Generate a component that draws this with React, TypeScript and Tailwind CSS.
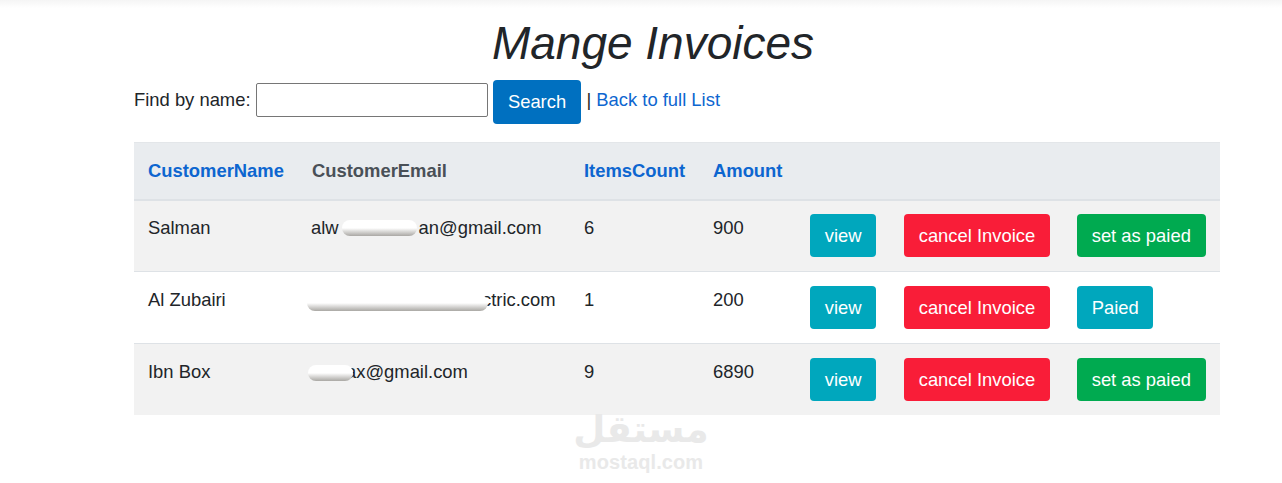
const rows = [
  { name: "Salman", count: "6", amount: "900", paid: false },
  { name: "Al Zubairi", count: "1", amount: "200", paid: true },
  { name: "Ibn Box", count: "9", amount: "6890", paid: false },
]

function Btn({ color, children }: { color: string; children: React.ReactNode }) {
  return (
    <button className={`h-[43px] px-[14.7px] rounded-[4px] whitespace-nowrap text-white text-[18.4px] ${color}`}>{children}</button>
  )
}

function Redact({ className }: { className: string }) {
  return (
    <span className={`absolute rounded-full bg-gradient-to-b from-white from-50% to-[#aaa8a4] ${className}`} />
  )
}

export default function App() {
  return (
    <div className="relative h-[483px] w-[1282px] overflow-hidden bg-white text-[#212529] text-[18.4px] font-['Liberation_Sans',Arial,sans-serif]">
      <div className="h-2 bg-gradient-to-b from-[#f5f5f5] to-white" />

      <div className="ml-[134px] w-[1086px]">
        <h1 className="mt-[12px] h-[48px] pr-[48px] text-center text-[46px] leading-[47px] italic">Mange Invoices</h1>

        <div className="mt-[12px] flex h-[44px] items-center">
          <label className="relative top-[-2px]">Find by name:</label>
          <input className="relative top-[-2px] ml-[5px] h-[34px] w-[232px] rounded-[2px] border border-[#767676] bg-white" />
          <button className="ml-[5px] h-[44px] w-[88px] rounded-[4px] pl-[1px] bg-[#0070c0] text-white text-[18.4px]">Search</button>
          <span className="relative top-[-2px] ml-[6px]">|</span>
          <a className="relative top-[-2px] ml-[5px] text-[#0d66d0]" href="#">Back to full List</a>
        </div>

        <table className="mt-[18px] w-[1086px] table-fixed border-collapse">
          <colgroup>
            <col className="w-[164px]" />
            <col className="w-[272px]" />
            <col className="w-[129px]" />
            <col className="w-[97px]" />
            <col className="w-[94px]" />
            <col className="w-[173px]" />
            <col className="w-[157px]" />
          </colgroup>
          <thead>
            <tr className="h-[57px] bg-[#e9ecef] border-b-2 border-b-[#dee2e6] border-t border-t-[#e3e6e9] text-left font-bold">
              <th className="px-[14px] text-[#0d66d0]">CustomerName</th>
              <th className="px-[14px] text-[#495057]">CustomerEmail</th>
              <th className="px-[14px] text-[#0d66d0]">ItemsCount</th>
              <th className="px-[14px] text-[#0d66d0]">Amount</th>
              <th />
              <th />
              <th />
            </tr>
          </thead>
          <tbody>
            {rows.map((r, i) => {
              const pad = i === 0 ? "pt-[14px]" : "pt-[15px]"
              const btnPad = i === 2 ? "px-[14px] pt-px align-middle" : "px-[14px] align-middle"
              return (
                <tr key={r.name} className={`h-[72px] last:h-[71px] border-b border-b-[#dee2e6] last:border-b-0 ${i % 2 === 0 ? "bg-[#f2f2f2]" : "bg-white"}`}>
                  <td className={`px-[14px] align-top leading-[26px] ${pad}`}>{r.name}</td>
                  <td className={`px-[14px] align-top leading-[26px] whitespace-nowrap ${pad}`}>
                    <span className="relative -ml-px block">
                      {i === 0 && <>alw<span className="inline-block w-[80px]" />an@gmail.com<Redact className="left-[31px] top-[5px] h-[16px] w-[75px]" /></>}
                      {i === 1 && <span className="block pl-[171px]">ctric.com<Redact className="left-[-4px] top-[8px] h-[16px] w-[181px]" /></span>}
                      {i === 2 && <span className="block pl-[35px]">ax@gmail.com<Redact className="left-[-3px] top-[6px] h-[16px] w-[45px]" /></span>}
                    </span>
                  </td>
                  <td className={`px-[14px] align-top leading-[26px] ${pad}`}>{r.count}</td>
                  <td className={`px-[14px] align-top leading-[26px] ${pad}`}>{r.amount}</td>
                  <td className={btnPad}><Btn color="bg-[#00a7bd]">view</Btn></td>
                  <td className={btnPad}><Btn color="bg-[#f91d38]">cancel Invoice</Btn></td>
                  <td className={btnPad}>
                    {r.paid ? <Btn color="bg-[#00a7bd]">Paied</Btn> : <Btn color="bg-[#00aa50]">set as paied</Btn>}
                  </td>
                </tr>
              )
            })}
          </tbody>
        </table>
      </div>

      {/* watermark */}
      <div className="absolute left-[541px] top-[414px] flex w-[200px] flex-col items-center text-[#e9e9e9] font-bold">
        <span dir="rtl" className="h-[32px] text-[37px] leading-[32px] font-['DejaVu_Sans',sans-serif]">مستقل</span>
        <span className="mt-[6px] text-[20px] leading-[20px] tracking-[0.1px]">mostaql.com</span>
      </div>
    </div>
  )
}
